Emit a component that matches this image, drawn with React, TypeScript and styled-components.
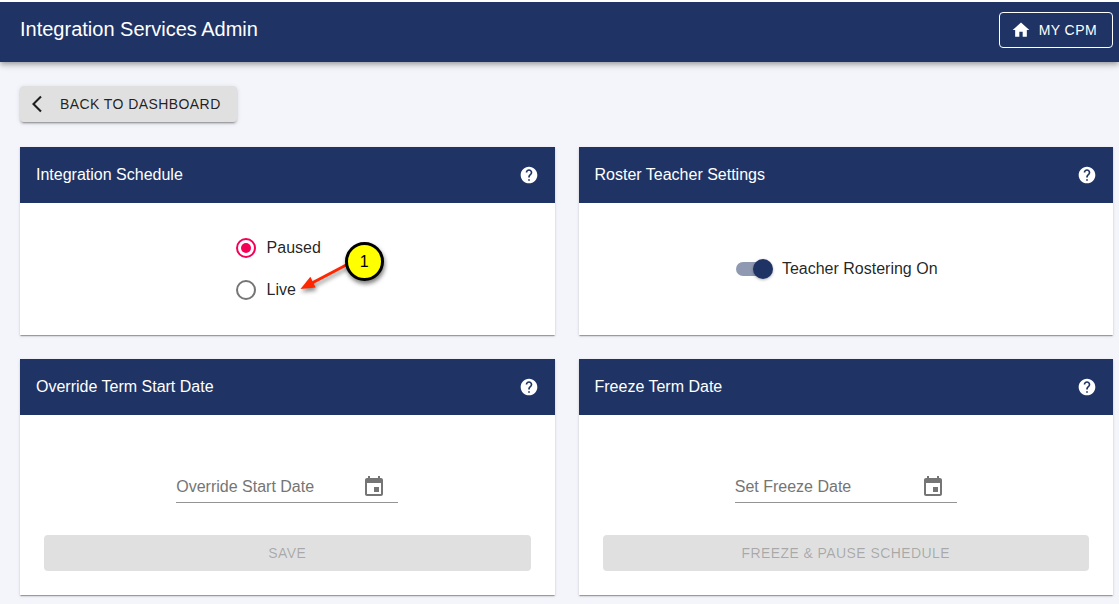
import React, { useState } from "react";
import styled, { createGlobalStyle } from "styled-components";

const navy = "#1f3465";
const ink = "rgba(0, 0, 0, 0.87)";

const GlobalStyle = createGlobalStyle`
  * { box-sizing: border-box; }
  body {
    margin: 0;
    background: #f4f5fa;
    color: ${ink};
    font-family: "Liberation Sans", Arial, sans-serif;
    font-size: 16px;
    line-height: 24px;
  }
  button, input { font: inherit; color: inherit; }
`;

const TopBar = styled.header`
  display: flex;
  align-items: flex-start;
  justify-content: space-between;
  padding: 10px 6px 14px 20px;
  border-top: 2px solid #fff;
  background: linear-gradient(${navy}, ${navy}) padding-box;
  color: #fff;
  box-shadow: 0 2px 4px -1px rgba(0, 0, 0, 0.2), 0 4px 5px rgba(0, 0, 0, 0.14),
    0 1px 10px rgba(0, 0, 0, 0.12);
`;

const PageTitle = styled.h1`
  margin: 0;
  font-size: 20px;
  line-height: 34px;
  font-weight: 400;
`;

const Button = styled.button`
  display: inline-flex;
  align-items: center;
  justify-content: center;
  gap: 8px;
  height: 36px;
  padding: 0 16px;
  border: 0;
  border-radius: 4px;
  font-size: 14px;
  letter-spacing: 0.03em;
  text-transform: uppercase;
  cursor: pointer;
`;

const OutlinedButton = styled(Button)`
  padding: 0 15px 0 11px;
  border: 1px solid #fff;
  background: transparent;
  color: #fff;
`;

const BackButton = styled(Button)`
  display: flex;
  padding-left: 12px;
  background: #e0e0e0;
  box-shadow: 0 3px 1px -2px rgba(0, 0, 0, 0.2), 0 2px 2px rgba(0, 0, 0, 0.14),
    0 1px 5px rgba(0, 0, 0, 0.12);
`;

const SubmitButton = styled(Button)`
  width: 100%;
  background: #e0e0e0;
  color: rgba(0, 0, 0, 0.26);
  cursor: default;
`;

const Content = styled.main`
  padding: 24px 6px 9px 20px;
`;

const CardGrid = styled.div`
  display: grid;
  grid-template-columns: repeat(2, minmax(0, 1fr));
  gap: 24px;
  margin-top: 25px;
`;

const CardBox = styled.section`
  display: flex;
  flex-direction: column;
  background: #fff;
  box-shadow: 0 2px 1px -1px rgba(0, 0, 0, 0.2), 0 1px 1px rgba(0, 0, 0, 0.14),
    0 1px 3px rgba(0, 0, 0, 0.12);
`;

const CardHeader = styled.div`
  display: flex;
  align-items: center;
  justify-content: space-between;
  height: 56px;
  padding: 0 16px;
  background: ${navy};
  color: #fff;
`;

const CardTitle = styled.h2`
  margin: 0;
  font-size: 16px;
  font-weight: 400;
`;

const HelpButton = styled.button`
  display: flex;
  padding: 0;
  border: 0;
  background: none;
  cursor: pointer;
`;

const CardBody = styled.div`
  display: flex;
  flex: 1;
  flex-direction: column;
  align-items: center;
  justify-content: center;
  padding: 24px;
`;

const DateBody = styled(CardBody)`
  gap: 32px;
  padding-top: 56px;
`;

const RadioGroup = styled.div`
  position: relative;
  padding-right: 18px;
`;

const Choice = styled.label`
  display: flex;
  align-items: center;
  gap: 11px;
  height: 42px;
  cursor: pointer;
`;

const Radio = styled.input`
  appearance: none;
  display: grid;
  place-items: center;
  width: 20px;
  height: 20px;
  margin: 0;
  border: 2px solid #757575;
  border-radius: 50%;

  &:checked { border-color: #f50057; }
  &:checked::before {
    content: "";
    width: 10px;
    height: 10px;
    border-radius: 50%;
    background: #f50057;
  }
`;

const SwitchLabel = styled.label`
  display: flex;
  align-items: center;
  gap: 9px;
  padding-right: 18px;
  cursor: pointer;
`;

const Switch = styled.input`
  appearance: none;
  display: grid;
  align-items: center;
  width: 37px;
  height: 20px;
  margin: 0;

  &::before,
  &::after {
    content: "";
    grid-area: 1 / 1;
  }
  &::before {
    width: 34px;
    height: 14px;
    border-radius: 7px;
    background: #9e9e9e;
  }
  &::after {
    width: 20px;
    height: 20px;
    border-radius: 50%;
    background: #fafafa;
    box-shadow: 0 1px 3px rgba(0, 0, 0, 0.3);
  }
  &:checked::before { background: #8f99b2; }
  &:checked::after {
    justify-self: end;
    background: ${navy};
  }
`;

const DateField = styled.div`
  display: flex;
  align-items: center;
  width: 222px;
  height: 32px;
  border-bottom: 1px solid #949494;
`;

const DateInput = styled.input`
  flex: 1;
  min-width: 0;
  padding: 0;
  border: 0;
  outline: 0;
  background: none;

  &::placeholder { color: #757575; opacity: 1; }
`;

const CalendarButton = styled.button`
  display: flex;
  padding: 0 12px;
  border: 0;
  background: none;
  color: #757575;
  cursor: pointer;
`;

const Callout = styled.div`
  position: absolute;
  left: 60px;
  top: 10px;
  width: 96px;
  height: 60px;
  pointer-events: none;
`;

const CalloutArrow = styled.svg`
  display: block;
  filter: drop-shadow(1px 3px 2px rgba(0, 0, 0, 0.45));
`;

const CalloutNumber = styled.span`
  position: absolute;
  left: 49px;
  top: 5px;
  width: 39px;
  height: 39px;
  border: 3px solid #000;
  border-radius: 50%;
  background: #ff0;
  color: #000;
  line-height: 33px;
  text-align: center;
  box-shadow: 1px 3px 4px rgba(0, 0, 0, 0.5);
`;

const icons = {
  home: "M10 20v-6h4v6h5v-8h3L12 3 2 12h3v8z",
  back: "M11.67 3.87L9.9 2.1 0 12l9.9 9.9 1.77-1.77L3.54 12z",
  help: "M12 2C6.48 2 2 6.48 2 12s4.48 10 10 10 10-4.48 10-10S17.52 2 12 2zm1 17h-2v-2h2v2zm2.07-7.75l-.9.92C13.45 12.9 13 13.5 13 15h-2v-.5c0-1.1.45-2.1 1.17-2.83l1.24-1.26c.37-.36.59-.86.59-1.41 0-1.1-.9-2-2-2s-2 .9-2 2H8c0-2.21 1.79-4 4-4s4 1.79 4 4c0 .88-.36 1.68-.93 2.25z",
  event:
    "M17 12h-5v5h5v-5zM16 1v2H8V1H6v2H5c-1.11 0-1.99.9-1.99 2L3 19c0 1.1.89 2 2 2h14c1.1 0 2-.9 2-2V5c0-1.1-.9-2-2-2h-1V1h-2zm3 18H5V8h14v11z",
};

function Icon({ name, size = 20 }: { name: keyof typeof icons; size?: number }) {
  return (
    <svg width={size} height={size} viewBox="0 0 24 24" fill="currentColor" aria-hidden="true">
      <path d={icons[name]} />
    </svg>
  );
}

function Card({ title, children }: { title: string; children: React.ReactNode }) {
  return (
    <CardBox>
      <CardHeader>
        <CardTitle>{title}</CardTitle>
        <HelpButton type="button" aria-label={`Help: ${title}`}>
          <Icon name="help" />
        </HelpButton>
      </CardHeader>
      {children}
    </CardBox>
  );
}

function DateForm({ label, action }: { label: string; action: string }) {
  return (
    <DateBody>
      <DateField>
        <DateInput type="text" placeholder={label} aria-label={label} />
        <CalendarButton type="button" aria-label="Choose date">
          <Icon name="event" size={24} />
        </CalendarButton>
      </DateField>
      <SubmitButton type="button" disabled>
        {action}
      </SubmitButton>
    </DateBody>
  );
}

export default function App() {
  const [schedule, setSchedule] = useState("Paused");
  const [rostering, setRostering] = useState(true);

  return (
    <>
      <GlobalStyle />
      <TopBar>
        <PageTitle>Integration Services Admin</PageTitle>
        <OutlinedButton type="button">
          <Icon name="home" />
          My CPM
        </OutlinedButton>
      </TopBar>
      <Content>
        <BackButton type="button">
          <Icon name="back" />
          Back to Dashboard
        </BackButton>
        <CardGrid>
          <Card title="Integration Schedule">
            <CardBody>
              <RadioGroup role="radiogroup" aria-label="Integration Schedule">
                {["Paused", "Live"].map((value) => (
                  <Choice key={value}>
                    <Radio
                      type="radio"
                      name="schedule"
                      checked={schedule === value}
                      onChange={() => setSchedule(value)}
                    />
                    {value}
                  </Choice>
                ))}
                <Callout>
                  <CalloutArrow width="96" height="60" viewBox="0 0 96 60" aria-hidden="true">
                    <path d="M54 26L16 46" stroke="#ff2600" strokeWidth="3" />
                    <path d="M4.5 52L14.4 39.8L19.6 50.4Z" fill="#ff2600" />
                  </CalloutArrow>
                  <CalloutNumber>1</CalloutNumber>
                </Callout>
              </RadioGroup>
            </CardBody>
          </Card>
          <Card title="Roster Teacher Settings">
            <CardBody>
              <SwitchLabel>
                <Switch
                  type="checkbox"
                  role="switch"
                  checked={rostering}
                  onChange={() => setRostering(!rostering)}
                />
                Teacher Rostering {rostering ? "On" : "Off"}
              </SwitchLabel>
            </CardBody>
          </Card>
          <Card title="Override Term Start Date">
            <DateForm label="Override Start Date" action="Save" />
          </Card>
          <Card title="Freeze Term Date">
            <DateForm label="Set Freeze Date" action="Freeze & Pause Schedule" />
          </Card>
        </CardGrid>
      </Content>
    </>
  );
}
